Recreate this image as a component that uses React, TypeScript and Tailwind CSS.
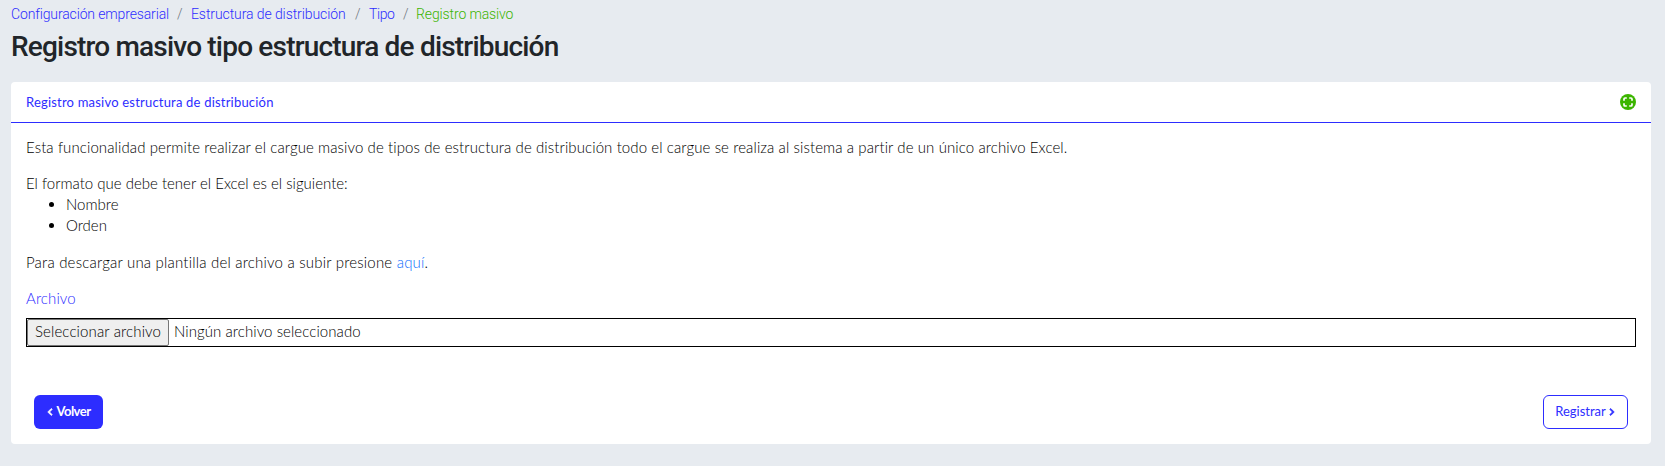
import { FaChevronLeft, FaChevronRight } from 'react-icons/fa';

const crumbs = [
  { label: 'Configuración empresarial', cls: 'w-[157px] tracking-[-0.14px]' },
  { label: 'Estructura de distribución', cls: 'w-[155px] tracking-[-0.09px]' },
  { label: 'Tipo', cls: 'w-[25px] tracking-[-0.4px]' },
];

function ExpandIcon() {
  return (
    <svg viewBox="0 0 16 16" className="size-4">
      <circle cx="8" cy="8" r="8" fill="#3cb500" />
      <path
        d="M4 6.8V5Q4 4 5 4H6.8M9.2 4H11Q12 4 12 5V6.8M12 9.2V11Q12 12 11 12H9.2M6.8 12H5Q4 12 4 11V9.2"
        fill="none"
        stroke="#fff"
        strokeWidth="1.7"
      />
    </svg>
  );
}

export default function App() {
  return (
    <div className="h-[466px] overflow-hidden bg-[#e7ebf0] pr-[14px] pl-[11px] font-['Lato','Liberation_Sans',sans-serif] text-[15px] font-light text-black">
      <nav className="flex h-[29px] items-center whitespace-nowrap font-['Roboto',sans-serif] text-[14px] leading-[21px] text-[#2d2dff]">
        {crumbs.map((c) => (
          <div key={c.label} className="flex">
            <a className={c.cls}>{c.label}</a>
            <span className="w-[23px] pl-[9px] text-[#6c757d]">/</span>
          </div>
        ))}
        <span className="-ml-px tracking-[-0.12px] text-[#3cb500]">Registro masivo</span>
      </nav>
      <h1 className="mt-[1px] h-[52px] whitespace-nowrap font-['Roboto',sans-serif] text-[28px] leading-[34px] font-medium tracking-[-0.81px] text-[#212529]">
        Registro masivo tipo estructura de distribución
      </h1>

      <section className="h-[362px] rounded-[4px] bg-white">
        <header className="flex h-[41px] items-center justify-between border-b border-[#2d2dff] px-[15px]">
          <h2 className="pt-[2px] text-[13px] font-normal tracking-[0.2px] text-[#2d2dff]">
            Registro masivo estructura de distribución
          </h2>
          <ExpandIcon />
        </header>

        <div className="px-[15px] pt-[14px] leading-[21px]">
          <p className="mb-[15px] tracking-[0.098px]">
            Esta funcionalidad permite realizar el cargue masivo de tipos de estructura de distribución todo el cargue
            se realiza al sistema a partir de un único archivo Excel.
          </p>
          <p>El formato que debe tener el Excel es el siguiente:</p>
          <ul className="mb-4 list-disc pl-10">
            <li>Nombre</li>
            <li>Orden</li>
          </ul>
          <p className="mb-[15px] tracking-[0.2px]">
            Para descargar una plantilla del archivo a subir presione <a className="text-[#0d6efd]">aquí</a>.
          </p>
          <label className="block tracking-[0.1px] text-[#2d2dff]">Archivo</label>
          <div className="mt-[9px] flex h-[29px] items-center border border-black leading-[19px]">
            <button className="flex h-[27px] w-[142px] items-center justify-center rounded-[2px] border border-[#767676] bg-[#efefef] pb-[2px] tracking-[0.13px]">
              Seleccionar archivo
            </button>
            <span className="ml-[5px] pb-[2px] tracking-[0.07px]">Ningún archivo seleccionado</span>
          </div>
        </div>

        <footer className="mt-12 flex items-center justify-between px-[23px] text-[13px]">
          <button className="flex h-[34px] w-[69px] items-center justify-center gap-[2px] rounded-[6px] bg-[#2d2dff] font-bold tracking-[-0.5px] text-white">
            <FaChevronLeft className="size-[8px] stroke-current stroke-[50px]" />
            Volver
          </button>
          <button className="flex h-[34px] w-[85px] items-center justify-center gap-[2px] rounded-[6px] border border-[#2d2dff] font-normal text-[#2d2dff]">
            Registrar
            <FaChevronRight className="size-[8px] stroke-current stroke-[50px]" />
          </button>
        </footer>
      </section>
    </div>
  );
}
